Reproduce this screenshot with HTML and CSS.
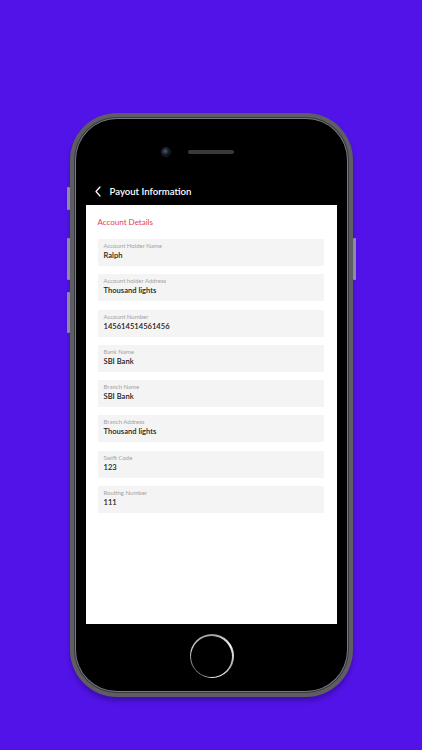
FILE: index.html
```html
<!DOCTYPE html>
<html>
<head>
<meta charset="utf-8">
<link rel="stylesheet" href="styles.css">
</head>
<body>
<div class="stage">
  <div class="phone">
    <span class="btn btn-mute"></span>
    <span class="btn btn-vol-up"></span>
    <span class="btn btn-vol-down"></span>
    <span class="btn btn-power"></span>
    <div class="bezel">
      <div class="sensors">
        <span class="camera"></span>
        <span class="speaker"></span>
      </div>
      <div class="appbar">
        <svg class="back" width="8" height="11" viewBox="0 0 8 11"><path d="M6 1 L2 5.5 L6 10" fill="none" stroke="#fff" stroke-width="1.2" stroke-linecap="round" stroke-linejoin="round"/></svg>
        <span class="title">Payout Information</span>
      </div>
      <div class="screen">
        <div class="section">Account Details</div>
        <div class="fields">
          <div class="field"><div class="label">Account Holder Name</div><div class="value">Ralph</div></div>
          <div class="field"><div class="label">Account holder Address</div><div class="value">Thousand lights</div></div>
          <div class="field"><div class="label">Account Number</div><div class="value">145614514561456</div></div>
          <div class="field"><div class="label">Bank Name</div><div class="value">SBI Bank</div></div>
          <div class="field"><div class="label">Branch Name</div><div class="value">SBI Bank</div></div>
          <div class="field"><div class="label">Branch Address</div><div class="value">Thousand lights</div></div>
          <div class="field"><div class="label">Swift Code</div><div class="value">123</div></div>
          <div class="field"><div class="label">Routing Number</div><div class="value">111</div></div>
        </div>
      </div>
      <div class="home-row">
        <div class="home"><span class="home-inner"></span></div>
      </div>
    </div>
  </div>
</div>
</body>
</html>
```

FILE: styles.css
```css
html, body {
  margin: 0;
  padding: 0;
}
body {
  background: #5213e9;
  width: 422px;
  height: 750px;
  overflow: hidden;
  font-family: Lato, "Noto Sans", sans-serif;
}
.stage {
  display: flex;
  justify-content: center;
  padding-top: 113px;
}
.phone {
  position: relative;
  width: 283px;
  height: 584px;
  box-sizing: border-box;
  padding: 6px;
  border-radius: 47px;
  background: #5e5d63;
  box-shadow: 0 4px 5px rgba(20, 0, 70, 0.35);
}
.btn {
  position: absolute;
  width: 3px;
  background: #8e88ad;
  border-radius: 1px;
}
.btn-mute { left: -3px; top: 74px; height: 23px; }
.btn-vol-up { left: -3px; top: 125px; height: 42px; }
.btn-vol-down { left: -3px; top: 179px; height: 41px; }
.btn-power { right: -3px; top: 125px; height: 42px; }
.bezel {
  height: 100%;
  border-radius: 41px;
  background: #000;
  box-shadow: 0 0 0 1px #7b7a80, 0 0 0 2px #38373c;
  display: flex;
  flex-direction: column;
  padding: 0 10px;
  box-sizing: border-box;
}
.sensors {
  display: flex;
  align-items: center;
  gap: 18px;
  margin-top: 29px;
  padding-left: 76px;
  height: 8px;
}
.camera {
  width: 8px;
  height: 8px;
  border-radius: 50%;
  background: radial-gradient(circle at 40% 40%, #4a5a78 0, #1d2433 45%, #0b0d12 70%);
  box-shadow: 0 0 0 1px #222;
}
.speaker {
  width: 46px;
  height: 4px;
  border-radius: 2px;
  background: #3a3a3c;
}
.appbar {
  margin-top: 21px;
  height: 28px;
  display: flex;
  align-items: center;
  padding-left: 8px;
  gap: 8px;
}
.back {
  display: block;
}
.title {
  color: #fff;
  font-size: 9.6px;
  font-weight: 600;
}
.screen {
  height: 419px;
  background: #fff;
  padding: 12px 13px 0 12px;
  box-sizing: border-box;
}
.section {
  color: #e0414f;
  font-size: 8px;
  line-height: 10px;
  height: 10px;
}
.fields {
  margin-top: 12px;
  display: flex;
  flex-direction: column;
  gap: 8.3px;
}
.field {
  background: #f4f4f4;
  height: 27px;
  box-sizing: border-box;
  padding: 3px 6px 0 6px;
}
.label {
  color: #a2a2a2;
  font-size: 6px;
  line-height: 8px;
}
.value {
  color: #1a1a1a;
  font-size: 7.6px;
  line-height: 10px;
  font-weight: 600;
}
.home-row {
  display: flex;
  justify-content: center;
  margin-top: 10px;
  padding-left: 1px;
}
.home {
  width: 44px;
  height: 44px;
  border-radius: 50%;
  box-sizing: border-box;
  padding: 1.5px;
  background: conic-gradient(from 0deg, #9a9a9a, #f2f2f2 60deg, #b0b0b0 120deg, #ffffff 170deg, #6a6a6a 230deg, #d8d8d8 290deg, #9a9a9a 360deg);
  display: flex;
}
.home-inner {
  flex: 1;
  border-radius: 50%;
  background: #000;
}
```
